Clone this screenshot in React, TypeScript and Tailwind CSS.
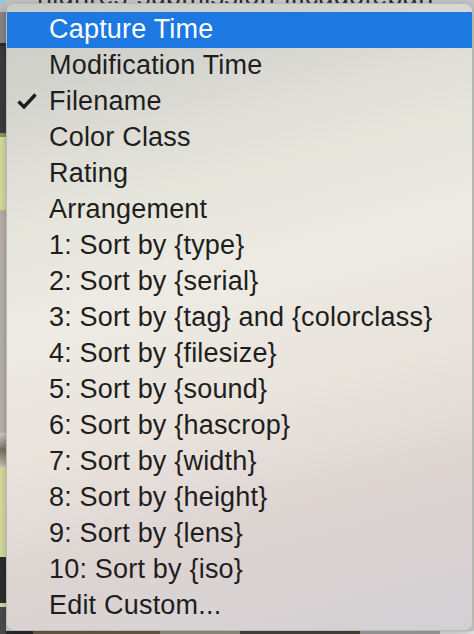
import React from "react";

const items = [
  "Capture Time",
  "Modification Time",
  "Filename",
  "Color Class",
  "Rating",
  "Arrangement",
  "1: Sort by {type}",
  "2: Sort by {serial}",
  "3: Sort by {tag} and {colorclass}",
  "4: Sort by {filesize}",
  "5: Sort by {sound}",
  "6: Sort by {hascrop}",
  "7: Sort by {width}",
  "8: Sort by {height}",
  "9: Sort by {lens}",
  "10: Sort by {iso}",
  "Edit Custom...",
];

function Check() {
  return (
    <svg width="20" height="16" viewBox="0 0 20 16" className="block">
      <path d="M1.5 8.5 L7 14 L18.5 1.5" fill="none" stroke="#1e1e1e" strokeWidth="3.4" strokeLinecap="butt" strokeLinejoin="miter" />
    </svg>
  );
}

export default function App() {
  return (
    <div
      className="relative w-[474px] h-[634px] overflow-hidden bg-[#c9c9c9]"
      style={{ fontFamily: '"Liberation Sans", Arial, Helvetica, sans-serif' }}
    >
      {/* background window content */}
      <div className="flex w-full h-full">
        <div className="flex flex-col w-[6px] shrink-0">
          <div className="h-[3px] bg-[#8fcbe9]" />
          <div className="h-[9px] bg-[#bdbdbd]" />
          <div className="h-[31px] bg-[#868686]" />
          <div className="h-[3px] bg-[#2a2a2a]" />
          <div className="h-[87px] bg-[#3b3b3b]" />
          <div className="h-[4px] bg-[#8e9460]" />
          <div className="h-[73px] bg-[#d5dc9c]" />
          <div className="h-[223px] bg-[#b8b1a9]" />
          <div className="h-[34px] bg-[linear-gradient(to_bottom,#d2cfc8,#7c6e60,#c7c3b5)]" />
          <div className="h-[90px] bg-[#d5dc9c]" />
          <div className="h-[46px] bg-[#2e2e2e]" />
          <div className="h-[4px] bg-[#d5dc9c]" />
          <div className="flex-1 bg-[#4a4a4a]" />
        </div>
        <div className="flex flex-col flex-1">
          <div className="relative h-[12px] bg-[linear-gradient(to_right,#c4c4c4,#cdcdcd,#c6c6c6)] overflow-hidden">
            <div className="absolute left-[31px] top-[-24px] text-[27px] text-[#2f2f2f] whitespace-nowrap tracking-[0.3px]">
              highres-submission-ificadoteban
            </div>
          </div>
          <div className="flex-1 bg-[#cfcfc8]" />
          <div className="flex h-[3px]">
            <div className="w-[27px] bg-[#2a2a2a]" />
            <div className="w-[127px] bg-[#6f5f45]" />
            <div className="w-[80px] bg-[#9a9c86]" />
            <div className="w-[120px] bg-[#4b4a40]" />
            <div className="w-[80px] bg-[#a9a9a9]" />
            <div className="flex-1 bg-[#e8e8e8]" />
          </div>
        </div>
      </div>

      {/* menu */}
      <div className="absolute left-[6px] top-[3px] w-[467px] h-[628px] rounded-[8px] border border-[#b9b9b7] overflow-hidden shadow-[0_2px_8px_rgba(0,0,0,0.25)] bg-[linear-gradient(165deg,#c9c9c6_0%,#d3d3ce_12%,#e6e5dc_30%,#edebe3_45%,#e9e3dc_62%,#ddd4d2_78%,#d3d0d4_100%)]">
        <div className="flex flex-col pt-[8px]">
          {items.map((label, i) => {
            const hi = i === 0;
            return (
              <div
                key={label}
                className={
                  "relative flex items-center h-[36px] pl-[42px] pb-[2px] text-[27px] tracking-[0.2px] whitespace-nowrap " +
                  (hi ? "bg-[#1d78e2] text-white" : "text-[#1e1e1e]")
                }
              >
                {label === "Filename" && (
                  <div className="absolute left-[10px] top-[9px]">
                    <Check />
                  </div>
                )}
                {label}
              </div>
            );
          })}
        </div>
      </div>
    </div>
  );
}
